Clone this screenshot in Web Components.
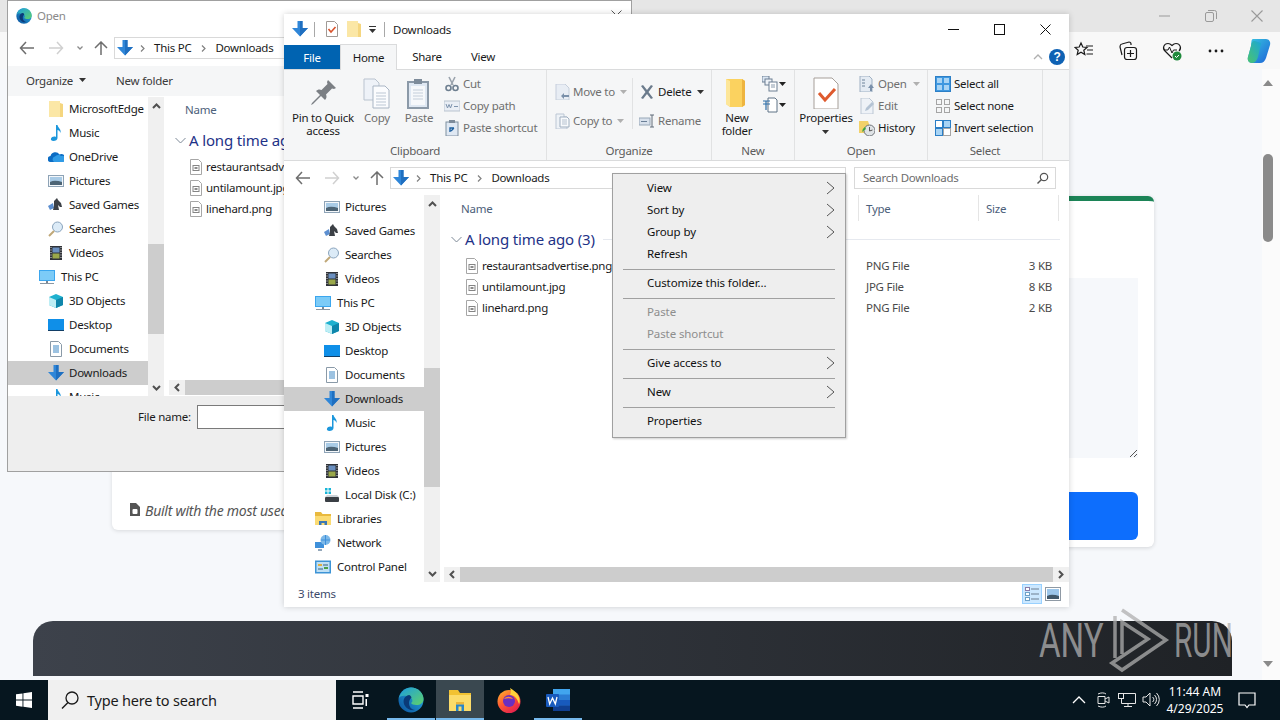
<!DOCTYPE html>
<html>
<head>
<meta charset="utf-8">
<title>Downloads</title>
<style>
  html, body { margin:0; padding:0; width:1280px; height:720px; overflow:hidden; }
  body { font:11.500px "Noto Sans", "Liberation Sans", sans-serif; letter-spacing:-.25px; color:#1a1a1a; }
</style>
</head>
<body>
<screen-desktop>
  <open-dialog></open-dialog>
  <explorer-window></explorer-window>
  <context-menu>
    <menu-item sub>View</menu-item>
    <menu-item sub>Sort by</menu-item>
    <menu-item sub>Group by</menu-item>
    <menu-item>Refresh</menu-item>
    <menu-sep></menu-sep>
    <menu-item>Customize this folder...</menu-item>
    <menu-sep></menu-sep>
    <menu-item disabled>Paste</menu-item>
    <menu-item disabled>Paste shortcut</menu-item>
    <menu-sep></menu-sep>
    <menu-item sub>Give access to</menu-item>
    <menu-sep></menu-sep>
    <menu-item sub>New</menu-item>
    <menu-sep></menu-sep>
    <menu-item>Properties</menu-item>
  </context-menu>
  <any-run></any-run>
</screen-desktop>
<script>
// icons are all small inline svg, keyed by name
const ICONS = {
  down: [16, '<path d="M5.5 0h5v7H16l-8 8.5L0 7h5.5z" fill="#2f86d8"/><path d="M8 0h2.5v7H16l-8 8.5z" fill="#1f6fc0"/>'],
  pictures: [16, '<rect x=".5" y="2.5" width="15" height="11" fill="#f4f7fa" stroke="#8ea3b6"/><rect x="2" y="4" width="12" height="8" fill="#a9cbe6"/><path d="M2 9c4-2 8-1 12 0v3H2z" fill="#4d6475"/>'],
  games: [16, '<path d="M0 9l5-3 1 5-4 2z" fill="#5d8fd0"/><path d="M6 4l3-3 1 2 3 3 1 4-2 0-2-2 1 5H5l1-4z" fill="#3c4046"/>'],
  searches: [16, '<circle cx="9.5" cy="6" r="5" fill="#dcebf7" stroke="#8aa4bd"/><path d="M6 10l-5 5" stroke="#c0a878" stroke-width="2"/>'],
  videos: [16, '<rect x="2" y="1" width="12" height="14" fill="#2f3238"/><rect x="4.5" y="2.5" width="7" height="5" fill="#6a8fc0"/><rect x="4.5" y="8.5" width="7" height="5" fill="#9aa84a"/><path d="M3 2v12M13 2v12" stroke="#ddd" stroke-dasharray="1 1.5"/>'],
  pc: [16, '<rect x="0" y="1" width="16" height="11" fill="#3ba6ee"/><rect x="1" y="2" width="14" height="9" fill="#7ccbf7"/><path d="M7 12h2v2H7z" fill="#7a8794"/><path d="M1 14.5h14" stroke="#8b97a3"/>'],
  cube: [16, '<path d="M8 1l7 3v8l-7 3-7-3V4z" fill="#1fb1cf"/><path d="M1 4l7 3v8l-7-3z" fill="#bdeef5"/><path d="M8 7l7-3v8l-7 3z" fill="#0f86ab"/>'],
  desktop: [16, '<rect x="0" y="2" width="16" height="12" fill="#0f8fe8"/><path d="M0 13h16v1H0z" fill="#123e66"/>'],
  docs: [16, '<path d="M2.5.5h8l3 3v12h-11z" fill="#fff" stroke="#8a9aa8"/><path d="M5 5h6M5 7h6M5 9h6M5 11h6" stroke="#3b86c4"/>'],
  music: [16, '<path d="M8 0h1.5c.5 3 4 4 3 8-.5-2-2-3-3-3v8c0 2-2 3-4 3s-3-1-2.500-2.500S6 11 8 12z" fill="#1c97dc"/>'],
  disk: [16, '<rect x="1" y="10" width="14" height="5" rx="1" fill="#3a3f45"/><path d="M3 8h10l2 2H1z" fill="#cdd3d8"/><rect x="1" y="1" width="2.500" height="2.500" fill="#19b5d8"/><rect x="4.500" y="1" width="2.500" height="2.500" fill="#19b5d8"/><rect x="1" y="4.500" width="2.500" height="2.500" fill="#19b5d8"/><rect x="4.500" y="4.500" width="2.500" height="2.500" fill="#19b5d8"/>'],
  libraries: [16, '<path d="M0 1h6l1.500 2H16v11H0z" fill="#e9b93e"/><path d="M0 5h16v9H0z" fill="#fbdb73"/><path d="M4 14v-4h8v4H9.500v-2h-3v2z" fill="#3b77b5"/>'],
  network: [16, '<rect x="0" y="7" width="9" height="6" fill="#3f90da"/><path d="M3 15h4" stroke="#6f8aa3" stroke-width="1.500"/><circle cx="10.500" cy="5" r="5" fill="#7cb8e8"/><path d="M6 5h9M10.500 0v10" stroke="#3f90da"/>'],
  control: [16, '<rect x="0" y="1.500" width="16" height="13" fill="#3d94d6"/><rect x="1.500" y="3" width="13" height="10" fill="#bfe0f5"/><rect x="3" y="5" width="4" height="2" fill="#e0b040"/><rect x="9" y="8" width="4" height="2" fill="#4aa04a"/><path d="M3 10h5M8 6h5" stroke="#37617f"/>'],
  onedrive: [16, '<path d="M3 13a3 3 0 0 1-.5-6 5 5 0 0 1 9-1.500A4 4 0 0 1 15 13z" fill="#0b6cc4"/><path d="M6 13a3 3 0 0 1 1-5.500 4 4 0 0 1 6-.5 3 3 0 0 1 2 6z" fill="#2f9be6"/>'],
  folder: [16, '<path d="M1 0h11v16H1z" fill="#fbe7a6"/><path d="M12 2l3 1v13h-3z" fill="#f5d67f"/>'],
  file: [16, '<path d="M2.500.5h8l3 3v12h-11z" fill="#fff" stroke="#a6a6a6"/><rect x="5" y="6.500" width="6" height="5" fill="#fff" stroke="#858585"/><rect x="6.500" y="8" width="3" height="2" fill="#8a8a8a"/>'],
  check: [16, '<path d="M2.500.5h8l3 3v12h-11z" fill="#fff" stroke="#a09a96"/><path d="M4.500 8l2.500 3 4.500-5" fill="none" stroke="#d9532c" stroke-width="1.600"/>'],
  pin: [32, '<path d="M21 3l8 8-2 1-2-.5-6 6c1 2 .5 4-1 5.500l-4-4-8 8-2 1 1-2 8-8-4-4c1.500-1.500 3.500-2 5.500-1l6-6-.5-2z" fill="#7b7f84"/>'],
  copy: [32, '<path d="M3 2h11l4 4v17H3z" fill="#eef2f8" stroke="#b9c3cf"/><path d="M12 9h12l4 4v18H12z" fill="#fbfcfe" stroke="#a9b5c4"/><path d="M15 16h10M15 19h10M15 22h10M15 25h10M15 28h10" stroke="#bcc7d4"/>'],
  paste: [32, '<rect x="5" y="5" width="20" height="26" fill="#dfe8f3" stroke="#8b99a8" stroke-width="2"/><rect x="8" y="9" width="14" height="19" fill="#f6f8fb"/><rect x="11" y="2" width="8" height="5" fill="#7d8b9a"/><path d="M10 13h10M10 16h10M10 19h10M10 22h10" stroke="#c4ceda"/>'],
  cut: [16, '<path d="M5 1l4 8M11 1L7 9" stroke="#9aa3ad" stroke-width="1.600"/><circle cx="4.500" cy="12" r="2.500" fill="none" stroke="#6e7f90" stroke-width="1.600"/><circle cx="11.500" cy="12" r="2.500" fill="none" stroke="#6e7f90" stroke-width="1.600"/>'],
  copypath: [16, '<rect x="0" y="3" width="16" height="10" fill="#e9eef5" stroke="#b9c3cf"/><path d="M2 6l1.500 4L5 6.500 6.500 10 8 6M10 8.500h4" fill="none" stroke="#7d93ad"/>'],
  pastecut: [16, '<rect x="2" y="2" width="12" height="14" fill="#dfe8f3" stroke="#7f8fa0"/><rect x="5" y="0" width="6" height="3" fill="#7d8b9a"/><path d="M6 12V8h4M10 8l-3 3" fill="none" stroke="#1e5f9e" stroke-width="1.400"/>'],
  moveto: [16, '<path d="M1 0h9l4 4v12H1z" fill="#e8edf4" stroke="#c5cedb"/><path d="M14 9v2H9V9l-3 3 3 3v-2h5" fill="#7a90aa"/>'],
  copyto: [16, '<path d="M1 1h8v3h3v12H1z" fill="#eef2f7" stroke="#bcc7d4"/><path d="M5 4h7l2 2v8H5z" fill="#f8fafc" stroke="#9faebf"/><path d="M7 7h5M7 9h5M7 11h5" stroke="#b5c1cf"/>'],
  del: [16, '<path d="M2 2l2-1 4 5 4-5 2 1-4.500 6L14 14l-2 1-4-5-4 5-2-1 4.500-6z" fill="#6b7b8c"/>'],
  rename: [16, '<rect x="0" y="5" width="11" height="7" fill="#d8e1ec" stroke="#98a7b8"/><path d="M2 8.500h6" stroke="#6a7f97"/><path d="M11 2h4M13 2v12M11 14h4" fill="none" stroke="#5f6b78"/>'],
  newfolder: [32, '<path d="M5 2h16l3 2v24l-3 2H9l-4-3z" fill="#fbd25f"/><path d="M21 2l3 2v24l-3 2z" fill="#eeb43f"/><path d="M5 2l4 2v26l-4-3z" fill="#fde699"/>'],
  newitem: [16, '<rect x="0" y="0" width="7" height="6" fill="#dbe6f2" stroke="#6c7f93"/><rect x="3" y="3" width="7" height="6" fill="#eff3f8" stroke="#6c7f93"/><rect x="7" y="6" width="8" height="9" fill="#fff" stroke="#6c7f93"/><path d="M9 9h4M9 11h4" stroke="#8a9bad"/>'],
  easy: [16, '<path d="M6 1h7l2 2v12H6z" fill="#fff" stroke="#5f7286"/><path d="M1 4h7M1 7h7M4 4v9" fill="none" stroke="#2f6fa8" stroke-width="1.200"/>'],
  props: [32, '<path d="M4 1h18l6 6v25H4z" fill="#fff" stroke="#a69f99"/><path d="M9 16l6 7 10-11" fill="none" stroke="#de5a2e" stroke-width="3"/>'],
  open: [16, '<path d="M1 0h9l3 3v13H1z" fill="#e4ebf3" stroke="#9fb0c2"/><path d="M3 4h3M3 7h3M3 10h3" stroke="#6d8299"/><path d="M12 8l3 4h-2v3h-2v-3H9z" fill="#7a90aa"/>'],
  edit: [16, '<path d="M2 0h8l4 4v12H2z" fill="#eef2f7" stroke="#bcc7d4"/><path d="M6 13l1-3 6-6 2 2-6 6z" fill="#b4c3d4"/>'],
  history: [16, '<path d="M0 1h9l1 3v9H0z" fill="#f2d169"/><circle cx="10.500" cy="10.500" r="5.500" fill="#dfe3e6" stroke="#6d7277"/><path d="M10.500 7v4l3-1" fill="none" stroke="#555"/><path d="M3 12a6 6 0 0 1 3-5l1 2-4 3z" fill="#3ea63e"/>'],
  selall: [16, '<rect x=".5" y=".5" width="15" height="15" fill="#3f98e0" stroke="#2c7fc6"/><rect x="2" y="2" width="5" height="5" fill="#a8d4f5"/><rect x="9" y="2" width="5" height="5" fill="#a8d4f5"/><rect x="2" y="9" width="5" height="5" fill="#a8d4f5"/><rect x="9" y="9" width="5" height="5" fill="#a8d4f5"/>'],
  selnone: [16, '<rect x="1.500" y="1.500" width="5" height="5" fill="none" stroke="#a5a5a5"/><rect x="9.500" y="1.500" width="5" height="5" fill="none" stroke="#a5a5a5"/><rect x="1.500" y="9.500" width="5" height="5" fill="none" stroke="#a5a5a5"/><rect x="9.500" y="9.500" width="5" height="5" fill="none" stroke="#a5a5a5"/>'],
  invert: [16, '<rect x=".5" y="8.500" width="7" height="7" fill="#a8d4f5" stroke="#2c7fc6"/><rect x="8.500" y=".5" width="7" height="7" fill="#a8d4f5" stroke="#2c7fc6"/><rect x=".5" y=".5" width="7" height="7" fill="#fff" stroke="#2c7fc6"/><rect x="8.500" y="8.500" width="7" height="7" fill="#fff" stroke="#a5a5a5"/>'],
  details: [16, '<rect x="1.500" y="1.500" width="4" height="3" fill="#fff" stroke="#8a7ba8"/><rect x="1.500" y="6.500" width="4" height="3" fill="#fff" stroke="#6ca0c8"/><rect x="1.500" y="11.500" width="4" height="3" fill="#fff" stroke="#6ca0c8"/><path d="M7 3h8M7 8h8M7 13h8" stroke="#6d7f91"/>'],
  large: [16, '<rect x=".5" y="1.500" width="15" height="13" fill="#fff" stroke="#8f9aa5"/><rect x="2" y="3" width="12" height="10" fill="#9cc6ea"/><path d="M2 10c4-2 8-1 12 0v3H2z" fill="#41586a"/>'],
  start: [16, '<path d="M0 2.300l6.500-.9v6.200H0zM7.400 1.300L16 0v7.600H7.400zM0 8.500h6.500v6.200L0 13.800zM7.400 8.500H16V16l-8.600-1.200z" fill="#fff"/>'],
  mag: [20, '<circle cx="12" cy="8" r="6" fill="none" stroke="#1a1a1a" stroke-width="1.300"/><path d="M8 12.500L2 18.500" stroke="#1a1a1a" stroke-width="1.500"/>'],
  taskview: [20, '<path d="M3 2h10M3 18h10M3 6h10v8H3z" fill="none" stroke="#fff" stroke-width="1.400"/><rect x="15.500" y="4" width="3" height="3" fill="#fff"/><rect x="15.500" y="9" width="1.500" height="7" fill="#fff"/>'],
  edge: [26, '<defs><linearGradient id="b" x1="0" y1="1" x2="1" y2="0"><stop offset="0" stop-color="#0b4f9c"/><stop offset="1" stop-color="#29b6e8"/></linearGradient><linearGradient id="g" x1="0" y1="0" x2="1" y2="1"><stop offset="0" stop-color="#1b9de2"/><stop offset="1" stop-color="#5fd16a"/></linearGradient></defs><circle cx="13" cy="13" r="12.500" fill="url(#b)"/><path d="M.8 11C3 4 8 .5 13 .5 20 .5 25.500 6 25.500 12c0 4-3.500 6-7 6-3 0-5-1-5.500-2 2-1 2-4-.5-5.500C8 8 3 8 .8 11z" fill="url(#g)"/><path d="M11 8c-5 1-7 6-4 11 2 3 6 5 10 4-4-.5-6-3.500-6-7 0-2 1-4 2.500-5.500C13 9 12 8 11 8z" fill="#0a3a78"/>'],
  explorer: [26, '<path d="M2 3h9l2 3h11v18H2z" fill="#f2c232"/><path d="M2 8h22v16H2z" fill="#fcdc6a"/><rect x="9" y="15" width="8" height="2.500" fill="#ecb53b"/><rect x="9" y="17.500" width="8" height="6.500" fill="#2a86c8"/><rect x="11.500" y="19.500" width="3" height="4.500" fill="#fcdc6a"/>'],
  firefox: [26, '<defs><linearGradient id="f" x1="0" y1="0" x2=".7" y2="1"><stop offset="0" stop-color="#ffbd2e"/><stop offset=".5" stop-color="#ff5a32"/><stop offset="1" stop-color="#e3204f"/></linearGradient></defs><circle cx="13" cy="14.500" r="11.500" fill="url(#f)"/><path d="M14 1c3 2 7 4 9 9 1 3 1 6 0 7-2-6-5-9-9-9 1-2 1-5 0-7z" fill="#ffd13a"/><circle cx="13" cy="14" r="6" fill="#6a2fc0"/><path d="M8 12c2-3 7-3 9 0-3-1-6-1-9 0z" fill="#ff8a3a"/>'],
  word: [26, '<rect x="8" y="2" width="17" height="22" rx="1.500" fill="#2b7cd3"/><path d="M8 2h17v5.500H8z" fill="#41a5ee"/><path d="M8 13h17v5.500H8z" fill="#185abd"/><path d="M8 18.500h17V24H8z" fill="#103f91"/><rect x="1" y="7" width="13" height="13" rx="1" fill="#185abd"/><path d="M3 10l1.700 7L7.500 11l2.800 6L12 10" fill="none" stroke="#fff" stroke-width="1.300"/>'],
  tray_up: [14, '<path d="M1 10l6-6 6 6" fill="none" stroke="#fff" stroke-width="1.300"/>'],
  tray_meet: [16, '<path d="M3 4.500h7v7H3zM10 7l4-2v6l-4-2" fill="none" stroke="#e6e6e6"/><path d="M3 2c3-1.500 6-1.500 8 0M3 14c3 1.500 6 1.500 8 0" fill="none" stroke="#e6e6e6"/>'],
  tray_net: [18, '<rect x=".5" y="2.500" width="5" height="5" fill="none" stroke="#e6e6e6"/><path d="M5.500 2.500h12v10H3.500V7.500M10 12.500v3M6 15.500h8M1 6" fill="none" stroke="#e6e6e6"/>'],
  tray_vol: [18, '<path d="M1 6h3l4-4v13l-4-4H1zM10.500 6a3 3 0 0 1 0 5M12.500 4a6 6 0 0 1 0 9M14.500 2a9 9 0 0 1 0 13" fill="none" stroke="#e6e6e6"/>'],
  notify: [18, '<path d="M1 2h16v12H11l-2 2.500L7 14H1z" fill="none" stroke="#fff" stroke-width="1.200"/>'],
  fav: [20, '<path d="M7 2l1.800 4 4.200.4-3.200 2.800 1 4.300L7 11.200 3.200 13.500l1-4.300L1 6.400 5.200 6z" fill="none" stroke="#1a1a1a" stroke-width="1.200"/><path d="M12 5h7M13 9h6M12.500 13h6.500" stroke="#1a1a1a" stroke-width="1.200"/>'],
  collect: [20, '<path d="M4 14l-2-8c0-2 1-3 2-3l7-2c1 0 2 1 2 2v1" fill="none" stroke="#1a1a1a" stroke-width="1.200"/><rect x="6.500" y="6.500" width="12" height="12" rx="2.500" fill="#f8f8f8" stroke="#1a1a1a" stroke-width="1.200"/><path d="M12.500 9v7M9 12.500h7" stroke="#1a1a1a" stroke-width="1.200"/>'],
  health: [20, '<path d="M10 17L3 10C0 7 2 2.500 6 2.500c2 0 3 1 4 2 1-1 2-2 4-2 4 0 6 4.500 3 7.500" fill="none" stroke="#1a1a1a" stroke-width="1.200"/><path d="M2 9h4l1.500-3 2.500 6 1.500-3H15" fill="none" stroke="#1a1a1a"/><circle cx="15" cy="15" r="4.500" fill="#1f8a3c"/><path d="M13 15l1.500 1.500 2.500-2.500" fill="none" stroke="#fff"/>'],
  more: [20, '<circle cx="4" cy="10" r="1.400" fill="#1a1a1a"/><circle cx="10" cy="10" r="1.400" fill="#1a1a1a"/><circle cx="16" cy="10" r="1.400" fill="#1a1a1a"/>'],
  copilot: [26, '<defs><linearGradient id="c1" x1="0" y1="0" x2="1" y2="1"><stop offset="0" stop-color="#38c7e0"/><stop offset="1" stop-color="#1d63d8"/></linearGradient><linearGradient id="c2" x1="0" y1="1" x2="1" y2="0"><stop offset="0" stop-color="#4cc46d"/><stop offset="1" stop-color="#1aa6d8"/></linearGradient></defs><path d="M7 1h13c3 0 5 3 4 6l-4 13c-1 3-3 5-6 5H6c-3 0-5-3-4-6L5 8c.5-3 0-7 2-7z" fill="url(#c1)"/><path d="M2 19L5 8c.5-3 1-5 4-5l6 2-3 14c-1 3-3 6-6 6-3 0-5-3-4-6z" fill="url(#c2)"/>']
};

function svgFor(name, size) {
  const [box, body] = ICONS[name] || [16, ''];
  const s = size || box;
  return `<svg width="${s}" height="${s}" viewBox="0 0 ${box} ${box}" style="display:block;flex:none">${body}</svg>`;
}

class WinIcon extends HTMLElement {
  constructor() {
    super();
    this.attachShadow({mode:'open'}).innerHTML = `<style>:host{display:block;flex:none;line-height:0;}</style>` +
      svgFor(this.getAttribute('name'), +this.getAttribute('size') || 0);
  }
}
customElements.define('win-icon', WinIcon);

const caret = (c='#444') => `<svg width="7" height="4" viewBox="0 0 7 4" style="display:block;flex:none"><path d="M0 0h7L3.500 4z" fill="${c}"/></svg>`;

class TreeItem extends HTMLElement {
  constructor() {
    super();
    const top = this.hasAttribute('top');
    this.attachShadow({mode:'open'}).innerHTML = `
      <style>
        :host { display:flex; align-items:center; height:24px; padding-left:${top?31:40}px; gap:${top?6:5}px; white-space:nowrap; color:#1a1a1a; }
        :host([selected]) { background:#cdcdcd; }
        span { margin-bottom:2px; }
      </style>
      <win-icon name="${this.getAttribute('icon')}"></win-icon><span><slot></slot></span>`;
  }
}
customElements.define('tree-item', TreeItem);

class VScroll extends HTMLElement {
  constructor() {
    super();
    this.attachShadow({mode:'open'}).innerHTML = `
      <style>
        :host { display:flex; flex-direction:column; width:16px; background:#f0f0f0; flex:none; overflow:hidden; }
        .arrow { height:17px; display:flex; align-items:center; justify-content:center; flex:none; }
        .thumb { background:#cdcdcd; flex:none; margin-top:${this.getAttribute('top')}px; height:${this.getAttribute('len')}px; }
        .grow { flex:1; }
      </style>
      <div class="arrow"><svg width="9" height="6" viewBox="0 0 9 6"><path d="M1 5l3.500-3.500L8 5" fill="none" stroke="#505050" stroke-width="2"/></svg></div>
      <div class="thumb"></div><div class="grow"></div>
      <div class="arrow"><svg width="9" height="6" viewBox="0 0 9 6"><path d="M1 1l3.500 3.500L8 1" fill="none" stroke="#505050" stroke-width="2"/></svg></div>`;
  }
}
customElements.define('v-scroll', VScroll);

class HScroll extends HTMLElement {
  constructor() {
    super();
    this.attachShadow({mode:'open'}).innerHTML = `
      <style>
        :host { display:flex; height:15px; background:#f0f0f0; flex:none; align-items:stretch; }
        .arrow { width:16px; display:flex; align-items:center; justify-content:center; flex:none; }
        .thumb { background:#cdcdcd; flex:1; }
      </style>
      <div class="arrow"><svg width="6" height="9" viewBox="0 0 6 9"><path d="M5 1L1.500 4.500 5 8" fill="none" stroke="#505050" stroke-width="2"/></svg></div>
      <div class="thumb"></div>
      <div class="arrow"><svg width="6" height="9" viewBox="0 0 6 9"><path d="M1 1l3.500 3.500L1 8" fill="none" stroke="#505050" stroke-width="2"/></svg></div>`;
  }
}
customElements.define('h-scroll', HScroll);

class FileGroup extends HTMLElement {
  constructor() {
    super();
    this.attachShadow({mode:'open'}).innerHTML = `
      <style>
        :host { display:block; }
        .head { display:flex; align-items:center; height:24px; margin-top:5px; padding-left:11px; color:#1e3287; font-size:15px; letter-spacing:-.15px; white-space:nowrap; overflow:hidden; }
        .head svg { margin-right:3px; flex:none; }
        .line { flex:1; height:1px; background:#e6e9ef; margin:0 9px 0 8px; }
        .rows { margin-top:4px; }
      </style>
      <div class="head"><svg width="11" height="7" viewBox="0 0 11 7"><path d="M.5 1l5 5 5-5" fill="none" stroke="#7c8896"/></svg><span>${this.getAttribute('label')}</span><div class="line"></div></div>
      <div class="rows"><slot></slot></div>`;
  }
}
customElements.define('file-group', FileGroup);

class FileRow extends HTMLElement {
  constructor() {
    super();
    const type = this.getAttribute('type');
    this.attachShadow({mode:'open'}).innerHTML = `
      <style>
        :host { display:grid; grid-template-columns:419px 120px 73px; align-items:center; height:21px; white-space:nowrap; }
        .name { display:flex; align-items:center; gap:2px; padding-left:24px; }
        .type { padding-left:7px; color:#4a4a4a; }
        .size { text-align:right; color:#4a4a4a; }
      </style>
      <div class="name"><win-icon name="file"></win-icon><slot></slot></div>
      ${type ? `<div class="type">${type}</div><div class="size">${this.getAttribute('size')}</div>` : ''}`;
  }
}
customElements.define('file-row', FileRow);

class PaneHeader extends HTMLElement {
  constructor() {
    super();
    // the open dialog only ever shows its Name column, the rest sits behind the explorer
    const cols = this.hasAttribute('name-only') ? ['Name'] : ['Name', 'Type', 'Size'];
    this.attachShadow({mode:'open'}).innerHTML = `
      <style>
        :host { display:grid; grid-template-columns:419px 120px 80px; height:27px; color:#4c607a; flex:none; }
        div { display:flex; align-items:center; padding-left:7px; border-right:1px solid #e5e5e5; height:26px; box-sizing:border-box; }
        div:first-of-type { padding-left:21px; }
      </style>
      ${cols.map(c => `<div>${c}</div>`).join('')}`;
  }
}
customElements.define('pane-header', PaneHeader);

class RibbonGroup extends HTMLElement {
  constructor() {
    super();
    this.attachShadow({mode:'open'}).innerHTML = `
      <style>
        :host { display:flex; flex-direction:column; flex:none; box-sizing:border-box; border-right:1px solid #e1e2e3; height:90px; }
        .row { display:flex; height:73px; flex:none; }
        .label { text-align:center; color:#5c5c5c; line-height:16px; height:16px; }
      </style>
      <div class="row"><slot></slot></div>
      <div class="label">${this.getAttribute('label')}</div>`;
  }
}
customElements.define('ribbon-group', RibbonGroup);

class RibbonLarge extends HTMLElement {
  constructor() {
    super();
    this.attachShadow({mode:'open'}).innerHTML = `
      <style>
        :host { display:flex; flex-direction:column; align-items:center; flex:none; padding-top:7px; box-sizing:border-box; text-align:center; line-height:13px; white-space:nowrap; }
        :host([disabled]) { color:#6f6f6f; }
        .text { margin-top:2px; }
      </style>
      <win-icon name="${this.getAttribute('icon')}"></win-icon><div class="text"><slot></slot></div>`;
  }
}
customElements.define('ribbon-large', RibbonLarge);

class RibbonSmall extends HTMLElement {
  constructor() {
    super();
    const g = this.getAttribute('gap') || 3;
    this.attachShadow({mode:'open'}).innerHTML = `
      <style>
        :host { display:flex; align-items:center; height:22px; gap:${g}px; white-space:nowrap; }
        :host([disabled]) { color:#6f6f6f; }
        .t { margin-bottom:2px; }
        .c { margin-left:3px; }
      </style>
      <win-icon name="${this.getAttribute('icon')}"></win-icon><span class="t"><slot></slot></span>
      ${this.hasAttribute('drop') ? `<span class="c">${caret(this.hasAttribute('disabled') ? '#b0b0b0' : '#333')}</span>` : ''}`;
  }
}
customElements.define('ribbon-small', RibbonSmall);

class RibbonColumn extends HTMLElement {
  constructor() {
    super();
    this.attachShadow({mode:'open'}).innerHTML = `
      <style>:host { display:flex; flex-direction:column; flex:none; padding-top:3px; }</style><slot></slot>`;
  }
}
customElements.define('ribbon-column', RibbonColumn);

class ExplorerRibbon extends HTMLElement {
  constructor() {
    super();
    this.attachShadow({mode:'open'}).innerHTML = `
      <style>
        :host { display:flex; height:90px; background:#f5f6f7; border-bottom:1px solid #dadbdc; flex:none; }
        .org { display:flex; flex-direction:column; gap:7px; padding-top:11px; }
        .vsep { width:1px; background:#e1e2e3; margin:8px 6px 14px 0; }
        .dropi { display:flex; align-items:center; gap:1px; height:21px; }
      </style>
      <ribbon-group label="Clipboard" style="width:263px">
        <ribbon-large icon="pin" style="width:78px">Pin to Quick<br>access</ribbon-large>
        <ribbon-large icon="copy" disabled style="width:30px">Copy</ribbon-large>
        <ribbon-large icon="paste" disabled style="width:42px;margin-left:6px">Paste</ribbon-large>
        <ribbon-column style="margin-left:4px">
          <ribbon-small icon="cut" disabled>Cut</ribbon-small>
          <ribbon-small icon="copypath" disabled>Copy path</ribbon-small>
          <ribbon-small icon="pastecut" disabled>Paste shortcut</ribbon-small>
        </ribbon-column>
      </ribbon-group>
      <ribbon-group label="Organize" style="width:165px">
        <div class="org" style="margin-left:8px;width:77px">
          <ribbon-small icon="moveto" gap="2" disabled drop>Move to</ribbon-small>
          <ribbon-small icon="copyto" gap="2" disabled drop>Copy to</ribbon-small>
        </div>
        <div class="vsep"></div>
        <div class="org">
          <ribbon-small icon="del" drop>Delete</ribbon-small>
          <ribbon-small icon="rename" disabled>Rename</ribbon-small>
        </div>
      </ribbon-group>
      <ribbon-group label="New" style="width:83px">
        <ribbon-large icon="newfolder" style="width:50px">New<br>folder</ribbon-large>
        <ribbon-column>
          <div class="dropi"><win-icon name="newitem"></win-icon>${caret('#222')}</div>
          <div class="dropi"><win-icon name="easy"></win-icon>${caret('#222')}</div>
        </ribbon-column>
      </ribbon-group>
      <ribbon-group label="Open" style="width:133px">
        <ribbon-large icon="props" style="width:62px">Properties<br><span style="display:inline-block;vertical-align:middle">${caret('#333')}</span></ribbon-large>
        <ribbon-column style="margin-left:2px">
          <ribbon-small icon="open" disabled drop>Open</ribbon-small>
          <ribbon-small icon="edit" disabled>Edit</ribbon-small>
          <ribbon-small icon="history">History</ribbon-small>
        </ribbon-column>
      </ribbon-group>
      <ribbon-group label="Select" style="width:115px">
        <ribbon-column style="margin-left:7px">
          <ribbon-small icon="selall">Select all</ribbon-small>
          <ribbon-small icon="selnone">Select none</ribbon-small>
          <ribbon-small icon="invert">Invert selection</ribbon-small>
        </ribbon-column>
      </ribbon-group>`;
  }
}
customElements.define('explorer-ribbon', ExplorerRibbon);

class NavButtons extends HTMLElement {
  constructor() {
    super();
    this.attachShadow({mode:'open'}).innerHTML = `
      <style>:host { display:flex; align-items:center; flex:none; }</style>
      <svg width="16" height="14" viewBox="0 0 16 14" style="margin-right:13px"><path d="M7 1L1.500 7 7 13M1.500 7H15" fill="none" stroke="#6e6e6e" stroke-width="1.500"/></svg>
      <svg width="16" height="14" viewBox="0 0 16 14" style="margin-right:10px"><path d="M9 1l5.500 6L9 13M14.500 7H1" fill="none" stroke="#d0d0d0" stroke-width="1.500"/></svg>
      <svg width="12" height="6" viewBox="0 0 12 6" style="margin-right:7px"><path d="M3.500 1.500L6 4l2.500-2.500" fill="none" stroke="#8a8a8a" stroke-width="1.300"/></svg>
      <svg width="16" height="14" viewBox="0 0 16 14"><path d="M2 7l6-6 6 6M8 1v13" fill="none" stroke="#6e6e6e" stroke-width="1.500"/></svg>`;
  }
}
customElements.define('nav-buttons', NavButtons);

class BreadCrumb extends HTMLElement {
  constructor() {
    super();
    const chev = `<svg width="5" height="7" viewBox="0 0 5 7"><path d="M1 .5l3 3-3 3" fill="none" stroke="#808080" stroke-width="1.200"/></svg>`;
    this.attachShadow({mode:'open'}).innerHTML = `
      <style>
        :host { display:flex; align-items:center; height:22px; box-sizing:border-box; border:1px solid #d9d9d9; background:#fff; padding-left:2px; white-space:nowrap; overflow:hidden; flex:none; }
        .c1 { margin:0 9px 0 7px; display:flex; } .c2 { margin:0 9px 0 10px; display:flex; }
        .t { margin-bottom:2px; }
      </style>
      <win-icon name="down"></win-icon><span class="c1">${chev}</span><span class="t">This PC</span><span class="c2">${chev}</span><span class="t">Downloads</span>`;
  }
}
customElements.define('bread-crumb', BreadCrumb);

class ExplorerWindow extends HTMLElement {
  constructor() {
    super();
    this.attachShadow({mode:'open'}).innerHTML = `
      <style>
        :host { position:absolute; left:284px; top:14px; width:785px; height:593px; background:#fff; display:flex; flex-direction:column; box-shadow:0 0 6px rgba(0,0,0,.18); overflow:hidden; }
        .title { display:flex; align-items:center; height:30px; flex:none; padding-left:8px; padding-right:1px; }
        .title .s { width:1px; height:15px; background:#a8a8a8; }
        .title .cap { flex:1; margin-left:8px; }
        .ctl { width:46px; height:30px; display:flex; align-items:center; justify-content:center; flex:none; }
        .tabs { display:flex; height:25px; flex:none; border-bottom:1px solid #dadbdc; align-items:stretch; box-sizing:content-box; }
        .tab { display:flex; align-items:center; justify-content:center; }
        .file { width:56px; background:#0063b1; color:#fff; height:24px; margin-top:1px; }
        .home { width:57px; background:#f5f6f7; border:1px solid #dadbdc; border-bottom:0; box-sizing:border-box; height:26px; }
        .share { width:60px; margin-left:0; } .view { width:52px; }
        .tabs .grow { flex:1; }
        .tabright { display:flex; align-items:center; gap:6px; padding-right:4px; }
        .help { width:16px; height:16px; border-radius:50%; background:#0f62b4; color:#fff; font:bold 12px/16px "Liberation Sans", sans-serif; text-align:center; }
        .nav { display:flex; align-items:center; height:34px; flex:none; padding-left:11px; padding-bottom:0; box-sizing:border-box; }
        .search { margin-left:8px; width:202px; height:22px; box-sizing:border-box; border:1px solid #d9d9d9; display:flex; align-items:center; padding:0 6px 0 8px; color:#6d6d6d; flex:none; }
        .search span { flex:1; margin-bottom:2px; }
        .main { display:flex; height:390px; flex:none; }
        .tree { width:140px; height:387px; overflow:hidden; flex:none; }
        .pane { flex:1; display:flex; flex-direction:column; height:387px; min-width:0; }
        .list { flex:1; }
        .h { margin-left:4px; }
        .status { display:flex; align-items:center; height:18px; padding-bottom:4px; flex:none; padding-left:14px; padding-right:8px; color:#3c4a6a; }
        .status span { flex:1; margin-bottom:2px; }
        .v1 { width:20px; height:20px; box-sizing:border-box; border:1px solid #99d1ff; background:#cce8ff; display:flex; align-items:center; justify-content:center; margin-right:3px; }
        .v2 { width:16px; height:20px; display:flex; align-items:center; justify-content:center; }
      </style>
      <div class="title">
        <win-icon name="down"></win-icon><div class="s" style="margin:0 9px 0 6px"></div>
        <win-icon name="check"></win-icon><win-icon name="folder" style="margin-left:6px"></win-icon>
        <span style="margin:0 8px 0 7px;display:flex;flex-direction:column;gap:2px"><span style="display:block;width:7px;height:1px;background:#333"></span>${caret('#333')}</span>
        <div class="s"></div><span class="cap">Downloads</span>
        <div class="ctl"><svg width="11" height="11" viewBox="0 0 11 11"><path d="M0 5.500h11" stroke="#111"/></svg></div>
        <div class="ctl"><svg width="11" height="11" viewBox="0 0 11 11"><rect x=".5" y=".5" width="10" height="10" fill="none" stroke="#111"/></svg></div>
        <div class="ctl"><svg width="11" height="11" viewBox="0 0 11 11"><path d="M.5.500l10 10M10.500.500l-10 10" stroke="#111"/></svg></div>
      </div>
      <div class="tabs">
        <div class="tab file">File</div><div class="tab home">Home</div><div class="tab share">Share</div><div class="tab view">View</div>
        <div class="grow"></div>
        <div class="tabright"><svg width="10" height="6" viewBox="0 0 10 6"><path d="M1 5l4-4 4 4" fill="none" stroke="#b0b0b0" stroke-width="1.300"/></svg><div class="help">?</div></div>
      </div>
      <explorer-ribbon></explorer-ribbon>
      <div class="nav">
        <nav-buttons style="margin-right:5px"></nav-buttons>
        <bread-crumb style="width:456px"></bread-crumb>
        <div class="search"><span>Search Downloads</span><svg width="13" height="13" viewBox="0 0 13 13"><circle cx="8" cy="5" r="3.700" fill="none" stroke="#555" stroke-width="1.200"/><path d="M5.500 7.500L1.500 11.500" stroke="#555" stroke-width="1.400"/></svg></div>
      </div>
      <div class="main">
        <div class="tree">
          <tree-item icon="pictures">Pictures</tree-item>
          <tree-item icon="games">Saved Games</tree-item>
          <tree-item icon="searches">Searches</tree-item>
          <tree-item icon="videos">Videos</tree-item>
          <tree-item icon="pc" top>This PC</tree-item>
          <tree-item icon="cube">3D Objects</tree-item>
          <tree-item icon="desktop">Desktop</tree-item>
          <tree-item icon="docs">Documents</tree-item>
          <tree-item icon="down" selected>Downloads</tree-item>
          <tree-item icon="music">Music</tree-item>
          <tree-item icon="pictures">Pictures</tree-item>
          <tree-item icon="videos">Videos</tree-item>
          <tree-item icon="disk">Local Disk (C:)</tree-item>
          <tree-item icon="libraries" top>Libraries</tree-item>
          <tree-item icon="network" top>Network</tree-item>
          <tree-item icon="control" top>Control Panel</tree-item>
        </div>
        <v-scroll top="156" len="119" style="height:387px"></v-scroll>
        <div class="pane">
          <div class="list">
            <pane-header></pane-header>
            <file-group label="A long time ago (3)">
              <file-row type="PNG File" size="3 KB">restaurantsadvertise.png</file-row>
              <file-row type="JPG File" size="8 KB">untilamount.jpg</file-row>
              <file-row type="PNG File" size="2 KB">linehard.png</file-row>
            </file-group>
          </div>
          <h-scroll class="h"></h-scroll>
        </div>
      </div>
      <div class="status"><span>3 items</span>
        <div class="v1"><win-icon name="details"></win-icon></div><div class="v2"><win-icon name="large"></win-icon></div>
      </div>`;
  }
}
customElements.define('explorer-window', ExplorerWindow);

class OpenDialog extends HTMLElement {
  constructor() {
    super();
    this.attachShadow({mode:'open'}).innerHTML = `
      <style>
        :host { position:absolute; left:7px; top:0; width:625px; height:472px; box-sizing:border-box; border:1px solid #a0a0a0; background:#fff; display:flex; flex-direction:column; overflow:hidden; }
        .title { display:flex; align-items:center; height:29px; flex:none; padding-left:8px; color:#8a8a8a; gap:5px; }
        .title .cap { flex:1; }
        .x { margin-right:9px; }
        .nav { display:flex; align-items:center; height:36px; flex:none; padding-left:11px; }
        .tools { display:flex; align-items:center; height:30px; box-sizing:border-box; padding-bottom:2px; background:#f5f6f7; flex:none; padding-left:18px; gap:30px; color:#3a3a3a; }
        .org { display:flex; align-items:center; gap:6px; }
        .main { display:flex; height:300px; flex:none; }
        .tree { width:140px; height:300px; overflow:hidden; flex:none; margin-top:1px; }
        .pane { flex:1; display:flex; flex-direction:column; min-width:0; height:299px; }
        .list { flex:1; }
        .bottom { flex:1; background:#eeeeee; display:flex; align-items:flex-start; padding:9px 0 0 130px; }
        .bottom label { line-height:24px; width:59px; flex:none; }
        .input { flex:1; height:24px; box-sizing:border-box; border:1px solid #7a7a7a; background:#fff; margin-right:60px; }
      </style>
      <div class="title"><win-icon name="edge" size="16"></win-icon><span class="cap">Open</span>
        <svg class="x" width="11" height="11" viewBox="0 0 11 11"><path d="M.5.500l10 10M10.500.500l-10 10" stroke="#555"/></svg></div>
      <div class="nav">
        <nav-buttons style="margin-right:5px"></nav-buttons>
        <bread-crumb style="width:350px"></bread-crumb>
      </div>
      <div class="tools"><span class="org">Organize ${caret('#333')}</span><span>New folder</span></div>
      <div class="main">
        <div class="tree">
          <tree-item icon="folder">MicrosoftEdge</tree-item>
          <tree-item icon="music">Music</tree-item>
          <tree-item icon="onedrive">OneDrive</tree-item>
          <tree-item icon="pictures">Pictures</tree-item>
          <tree-item icon="games">Saved Games</tree-item>
          <tree-item icon="searches">Searches</tree-item>
          <tree-item icon="videos">Videos</tree-item>
          <tree-item icon="pc" top>This PC</tree-item>
          <tree-item icon="cube">3D Objects</tree-item>
          <tree-item icon="desktop">Desktop</tree-item>
          <tree-item icon="docs">Documents</tree-item>
          <tree-item icon="down" selected>Downloads</tree-item>
          <tree-item icon="music">Music</tree-item>
        </div>
        <v-scroll top="130" len="90" style="height:299px;margin-top:1px"></v-scroll>
        <div class="pane">
          <div class="list">
            <pane-header name-only></pane-header>
            <file-group label="A long time ago (3)">
              <file-row>restaurantsadvertise.png</file-row>
              <file-row>untilamount.jpg</file-row>
              <file-row>linehard.png</file-row>
            </file-group>
          </div>
          <h-scroll style="margin-left:5px"></h-scroll>
        </div>
      </div>
      <div class="bottom"><label>File name:</label><div class="input"></div></div>`;
  }
}
customElements.define('open-dialog', OpenDialog);

class MenuItem extends HTMLElement {
  constructor() {
    super();
    this.attachShadow({mode:'open'}).innerHTML = `
      <style>
        :host { display:flex; align-items:center; height:22px; padding-left:34px; padding-right:10px; color:#111; white-space:nowrap; letter-spacing:-.1px; }
        :host([disabled]) { color:#8d8d8d; }
        span { flex:1; margin-bottom:2px; }
      </style>
      <span><slot></slot></span>
      ${this.hasAttribute('sub') ? '<svg width="9" height="14" viewBox="0 0 9 14"><path d="M1 1l7 6-7 6" fill="none" stroke="#555"/></svg>' : ''}`;
  }
}
customElements.define('menu-item', MenuItem);

class MenuSep extends HTMLElement {
  constructor() {
    super();
    this.attachShadow({mode:'open'}).innerHTML = `
      <style>:host { display:block; height:1px; margin:4px 10px 2px 10px; background:#a0a0a0; }</style>`;
  }
}
customElements.define('menu-sep', MenuSep);

class ContextMenu extends HTMLElement {
  constructor() {
    super();
    this.attachShadow({mode:'open'}).innerHTML = `
      <style>
        :host { position:absolute; left:612px; top:173px; width:234px; height:265px; box-sizing:border-box; border:1px solid #a0a0a0; background:#eeeeee; padding:3px 0 0 0; box-shadow:1px 1px 2px rgba(0,0,0,.2); }
      </style><slot></slot>`;
  }
}
customElements.define('context-menu', ContextMenu);

class BrowserBack extends HTMLElement {
  constructor() {
    super();
    this.attachShadow({mode:'open'}).innerHTML = `
      <style>
        :host { display:flex; flex-direction:column; height:680px; background:#f6f8fb; }
        .titlebar { display:flex; justify-content:flex-end; height:32px; background:#e6e6e6; flex:none; }
        .wc { width:46px; display:flex; align-items:center; justify-content:center; }
        .toolbar { display:flex; justify-content:flex-end; align-items:center; height:37px; background:#f8f8f8; flex:none; }
        .tb { width:44px; display:flex; justify-content:center; align-items:center; }
        .tb:last-child { width:42px; }
        .body { flex:1; display:flex; min-height:0; }
        .page { flex:1; display:flex; flex-direction:column; padding-top:127px; min-width:0; }
        .cards { display:flex; height:351px; flex:none; padding-left:112px; gap:20px; align-items:flex-start; }
        .left { width:488px; height:334px; background:#fff; border-radius:0 0 6px 6px; box-shadow:0 1px 4px rgba(0,0,0,.12); display:flex; align-items:flex-end; padding:0 0 10px 18px; box-sizing:border-box; color:#555; font:italic 14px "Noto Sans", sans-serif; gap:5px; white-space:nowrap; }
        .right { width:534px; height:351px; background:#fff; border-radius:6px; box-shadow:0 1px 4px rgba(0,0,0,.14); box-sizing:border-box; border-top:5px solid #1c8457; display:flex; flex-direction:column; align-items:flex-end; padding:77px 16px 0 0; }
        .ta { width:300px; height:180px; background:#f6f8fb; position:relative; }
        .grip { position:absolute; right:0; bottom:0; }
        .btn { width:300px; height:48px; background:#0d6efd; border-radius:6px; margin-top:34px; }
        .foot { height:55px; width:1199px; margin:74px 0 0 33px; border-radius:20px 20px 0 0; background:linear-gradient(90deg,#3d424b,#1f2226); flex:none; }
        .bar { width:18px; flex:none; background:#fbfbfb; display:flex; flex-direction:column; align-items:center; }
        .thumb { width:10px; height:88px; border-radius:5px; background:#8a8a8a; margin-top:68px; margin-left:-6px; }
        .grow { flex:1; }
        .up { margin-top:11px; margin-left:-6px; } .dn { margin-bottom:13px; margin-left:-6px; }
      </style>
      <div class="titlebar">
        <div class="wc"><svg width="12" height="12" viewBox="0 0 12 12"><path d="M0 6h11" stroke="#9a9a9a"/></svg></div>
        <div class="wc"><svg width="12" height="12" viewBox="0 0 12 12"><rect x=".5" y="2.500" width="8" height="9" rx="1.500" fill="none" stroke="#9a9a9a"/><path d="M3 .5h6.500a2 2 0 0 1 2 2V9" fill="none" stroke="#9a9a9a"/></svg></div>
        <div class="wc"><svg width="12" height="12" viewBox="0 0 12 12"><path d="M.5.500l11 11M11.500.500l-11 11" stroke="#9a9a9a" stroke-width="1.100"/></svg></div>
      </div>
      <div class="toolbar">
        <div class="tb"><win-icon name="fav"></win-icon></div>
        <div class="tb"><win-icon name="collect"></win-icon></div>
        <div class="tb"><win-icon name="health"></win-icon></div>
        <div class="tb"><win-icon name="more"></win-icon></div>
        <div class="tb"><win-icon name="copilot"></win-icon></div>
      </div>
      <div class="body">
        <div class="page">
          <div class="cards">
            <div class="left"><svg width="10" height="13" viewBox="0 0 10 13" style="margin-bottom:4px"><path d="M0 0h6l4 4v9H0z" fill="#555"/><rect x="2.500" y="6" width="5" height="5" rx="1" fill="#fff"/></svg><span>Built with the most used</span></div>
            <div class="right">
              <div class="ta"><svg class="grip" width="9" height="9" viewBox="0 0 9 9"><path d="M1 8l7-7M5 8l3-3" stroke="#555"/></svg></div>
              <div class="btn"></div>
            </div>
          </div>
          <div class="foot"></div>
        </div>
        <div class="bar">
          <svg class="up" width="10" height="6" viewBox="0 0 10 6"><path d="M0 6l5-6 5 6z" fill="#8a8a8a"/></svg>
          <div class="thumb"></div><div class="grow"></div>
          <svg class="dn" width="10" height="6" viewBox="0 0 10 6"><path d="M0 0l5 6 5-6z" fill="#8a8a8a"/></svg>
        </div>
      </div>`;
  }
}
customElements.define('browser-back', BrowserBack);

class TaskBar extends HTMLElement {
  constructor() {
    super();
    const app = (n, cls='') => `<div class="app ${cls}"><win-icon name="${n}"></win-icon></div>`;
    this.attachShadow({mode:'open'}).innerHTML = `
      <style>
        :host { display:flex; align-items:stretch; height:40px; background:#06161f; color:#fff; flex:none; }
        .start { width:48px; display:flex; align-items:center; justify-content:center; }
        .search { width:288px; background:#f0f0f0; color:#1a1a1a; display:flex; align-items:center; padding-left:12px; box-sizing:border-box; gap:7px; font-size:14.500px; letter-spacing:-.2px; }
        .tv { width:48px; display:flex; align-items:center; justify-content:center; margin-right:3px; }
        .app { width:48px; display:flex; align-items:center; justify-content:center; box-sizing:border-box; margin-right:1px; }
        .on { border-bottom:2px solid #76b9ed; padding-top:2px; }
        .active { background:#3a4850; }
        .grow { flex:1; }
        .tray { width:24px; display:flex; align-items:center; justify-content:center; }
        .clock { width:64px; text-align:center; font-size:12px; letter-spacing:0; line-height:17px; display:flex; flex-direction:column; justify-content:center; white-space:nowrap; }
        .note { width:40px; display:flex; align-items:center; justify-content:center; margin-right:13px; }
      </style>
      <div class="start"><win-icon name="start"></win-icon></div>
      <div class="search"><win-icon name="mag"></win-icon><span>Type here to search</span></div>
      <div class="tv"><win-icon name="taskview"></win-icon></div>
      ${app('edge','on')}${app('explorer','on active')}${app('firefox')}${app('word','on')}
      <div class="grow"></div>
      <div class="tray"><win-icon name="tray_up"></win-icon></div>
      <div class="tray"><win-icon name="tray_meet"></win-icon></div>
      <div class="tray"><win-icon name="tray_net"></win-icon></div>
      <div class="tray"><win-icon name="tray_vol"></win-icon></div>
      <div class="clock"><span>11:44 AM</span><span>4/29/2025</span></div>
      <div class="note"><win-icon name="notify"></win-icon></div>`;
  }
}
customElements.define('task-bar', TaskBar);

class AnyRun extends HTMLElement {
  constructor() {
    super();
    this.attachShadow({mode:'open'}).innerHTML = `
      <style>
        :host { position:absolute; left:1039px; top:608px; width:200px; height:66px; display:flex; align-items:center; color:rgba(175,175,175,.75); font:400 48px/1 Roboto, sans-serif; letter-spacing:0; pointer-events:none; }
        span { display:block; transform-origin:left center; white-space:nowrap; width:63px; }
        .a { transform:scaleX(.69); } .b { transform:scaleX(.62); width:60px; }
        svg { flex:none; margin:0 4px 0 6px; }
      </style>
      <span class="a">ANY</span>
      <svg width="62" height="66" viewBox="0 0 62 66"><path d="M7 8V50M14 2l44 30L14 62l-10-7 36-24L14 14V46" fill="none" stroke="rgba(175,175,175,.75)" stroke-width="3.500"/></svg>
      <span class="b">RUN</span>`;
  }
}
customElements.define('any-run', AnyRun);

class ScreenDesktop extends HTMLElement {
  constructor() {
    super();
    this.attachShadow({mode:'open'}).innerHTML = `
      <style>
        :host { display:flex; flex-direction:column; width:1280px; height:720px; position:relative; overflow:hidden; }
      </style>
      <browser-back></browser-back>
      <task-bar></task-bar>
      <slot></slot>`;
  }
}
customElements.define('screen-desktop', ScreenDesktop);
</script>
</body>
</html>
